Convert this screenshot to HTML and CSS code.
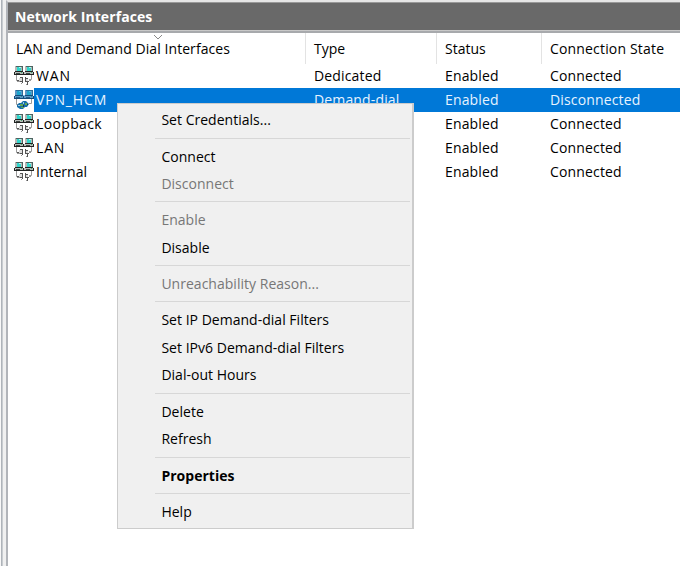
FILE: index.html
```html
<!DOCTYPE html>
<html lang="en">
<head>
<meta charset="utf-8">
<title>Network Interfaces</title>
<link rel="stylesheet" href="styles.css">
</head>
<body>
<svg class="defs" aria-hidden="true">
  <defs>
    <g id="computers">
      <path fill="#b5b8b6" d="M1 0h8v5H1zM11 0h8v5h-8z"/>
      <path fill="#4d6461" d="M2 0h7v1H2zM12 0h7v1h-7zM8 1h1v4H8zM18 1h1v4h-1z"/>
      <path fill="#30d5cb" d="M3 1h4v4H3zM13 1h4v4h-4z"/>
      <path fill="#b9f6ee" d="M5 1h2v1H5zM15 1h2v1h-2z"/>
      <path fill="#202322" d="M1 5h8v1H1zM11 5h8v1h-8zM0 6h1v2H0zM9 6h1v2H9zM19 6h1v2h-1zM0 8h20v1H0z"/>
      <path fill="#b6bbb8" d="M1 6h8v2H1zM10 6h9v2h-9z"/>
      <path fill="#3e4441" d="M2 7h4v1H2zM12 7h4v1h-4z"/>
      <path fill="#41a96a" d="M7 6h1v1H7zM17 6h1v1h-1z"/>
    </g>
    <g id="cable">
      <path fill="none" stroke="#999" d="M2.5 9v5.5H5M17.5 9v4.5H15"/>
    </g>
    <symbol id="network" viewBox="0 0 20 19">
      <use href="#computers"/><use href="#cable"/>
      <path fill="#ddd" d="M5 12h4v4H5zM11 13h3v3h-3z"/>
      <path fill="none" stroke="#555" d="M3 14.5h2M5 15.5h3M8.5 11v6M6 11.5h2M11.5 11v5M12 12.5h2M12 15.5h3M13.5 16v3"/>
      <path fill="#999" d="M3 15h3v1H3zM15 14h2v1h-2zM7 17h1v1H7zM12 18h1v1h-1z"/>
    </symbol>
    <symbol id="demand" viewBox="0 0 20 19">
      <use href="#computers"/>
      <path fill="#0878d2" opacity=".5" d="M1 0h8v5h2V0h8v6h1v3H0V6h1z"/>
      <use href="#cable"/>
      <path fill="#176fa9" d="M3 15l2-2h2l2-2h3l3 3-2 3h-2l-2 2H6l-3-2z"/>
      <path fill="#62a756" d="M6 14h3v2H6zM11 13h2v2h-2zM7 17h3v1H7z"/>
      <path fill="#9fcae2" d="M9 12h1v2H9zM4 15h2v1H4z"/>
      <path fill="#173e4a" d="M9 15h1v2H9zM13 14h1v1h-1z"/>
    </symbol>
  </defs>
</svg>
<main class="window">
  <div class="splitter"></div>
  <section class="pane">
    <h1 class="title"><span>Network Interfaces</span></h1>
    <div class="list">
      <div class="columns">
        <div class="column name"><svg class="sort" viewBox="0 0 10 6"><path d="M1 1l4 4 4-4"/></svg><span class="wide">LAN and Demand Dial Interfaces</span></div>
        <div class="column">Type</div><div class="column">Status</div><div class="column"><span class="state">Connection State</span></div>
      </div>
      <div class="row"><div class="name"><svg class="icon"><use href="#network"/></svg><span class="caps">WAN</span></div><div>Dedicated</div><div>Enabled</div><div>Connected</div></div>
      <div class="row selected"><div class="name"><svg class="icon"><use href="#demand"/></svg><span class="caps">VPN_HCM</span></div><div>Demand-dial</div><div>Enabled</div><div>Disconnected</div></div>
      <div class="row"><div class="name"><svg class="icon"><use href="#network"/></svg><span class="loose">Loopback</span></div><div>Dedicated</div><div>Enabled</div><div>Connected</div></div>
      <div class="row"><div class="name"><svg class="icon"><use href="#network"/></svg><span class="caps">LAN</span></div><div>Dedicated</div><div>Enabled</div><div>Connected</div></div>
      <div class="row"><div class="name"><svg class="icon"><use href="#network"/></svg><span>Internal</span></div><div>Dedicated</div><div>Enabled</div><div>Connected</div></div>
    </div>
  </section>
  <nav class="menu">
    <div class="item">Set Credentials...</div>
    <div class="separator"></div>
    <div class="item">Connect</div>
    <div class="item disabled">Disconnect</div>
    <div class="separator"></div>
    <div class="item disabled">Enable</div>
    <div class="item">Disable</div>
    <div class="separator"></div>
    <div class="item disabled">Unreachability Reason...</div>
    <div class="separator"></div>
    <div class="item">Set IP Demand-dial Filters</div>
    <div class="item">Set IPv6 Demand-dial Filters</div>
    <div class="item">Dial-out Hours</div>
    <div class="separator"></div>
    <div class="item">Delete</div>
    <div class="item">Refresh</div>
    <div class="separator"></div>
    <div class="item default">Properties</div>
    <div class="separator"></div>
    <div class="item">Help</div>
  </nav>
</main>
</body>
</html>
```

FILE: styles.css
```css
* { box-sizing: border-box; }
body { margin: 0; font: 14px/20px "Open Sans", "Noto Sans", sans-serif; color: #000; background: #fff; overflow: hidden; }
.defs { position: absolute; width: 0; height: 0; }
.window { position: relative; display: flex; width: 680px; height: 566px; }
.splitter { width: 6px; border-left: 1px solid #f8f8f8; background: linear-gradient(90deg, #aeb3b9 0 1px, #c8ccd0 1px 2px, #f0f0f0 2px); }
.pane { flex: 1; min-width: 0; border-left: 2px solid #b1b4b9; border-top: 2px solid #e6e6e6; }
.title { height: 31px; margin: 0; padding: 4px 7px; border-top: 1px solid #999; border-bottom: 2px solid #a7a9ac; background: #696969; color: #fff; font-size: 14px; line-height: 20px; font-weight: 700; letter-spacing: .08px; box-shadow: inset 0 -1px #c8c8c8; }
.columns, .row { display: grid; grid-template-columns: 298px 131px 105px 1fr; white-space: nowrap; }
.columns { height: 31px; align-items: start; }
.column { position: relative; height: 31px; padding: 6px 0 0 8px; border-right: 1px solid #e3e3e3; }
.column:last-child { border: 0; }
.wide { letter-spacing: .07px; }
.state { letter-spacing: .17px; }
.caps { letter-spacing: .85px; }
.loose { letter-spacing: .36px; }
.sort { position: absolute; left: 145px; top: 1px; width: 10px; height: 6px; fill: none; stroke: #888; stroke-width: 1; }
.row { height: 23.9px; align-items: stretch; }
.row > div { padding-left: 8px; line-height: 24px; letter-spacing: .15px; }
.row > .name { display: flex; align-items: flex-start; padding-left: 6px; letter-spacing: 0; }
.icon { flex: none; width: 20px; height: 19px; margin: 2px 2px 0 0; }
.selected { background: linear-gradient(90deg, #fff 0 26px, #0078d7 26px); color: #e7f3ff; }
.menu { position: absolute; left: 117px; top: 103px; width: 297px; height: 426px; padding: 2.3px 2px 0 37px; border: 1px solid #ccc; border-right-width: 2px; background: #f0f0f0; }
.item { height: 27.5px; padding-left: 6.4px; line-height: 27.5px; white-space: nowrap; letter-spacing: .02px; }
.separator { height: 8.8px; border-bottom: 4px solid transparent; background: linear-gradient(#d7d7d7, #d7d7d7) 0 100% / 100% 1px no-repeat padding-box; }
.disabled { color: #777; }
.default { font-weight: 700; color: #000; }
```
